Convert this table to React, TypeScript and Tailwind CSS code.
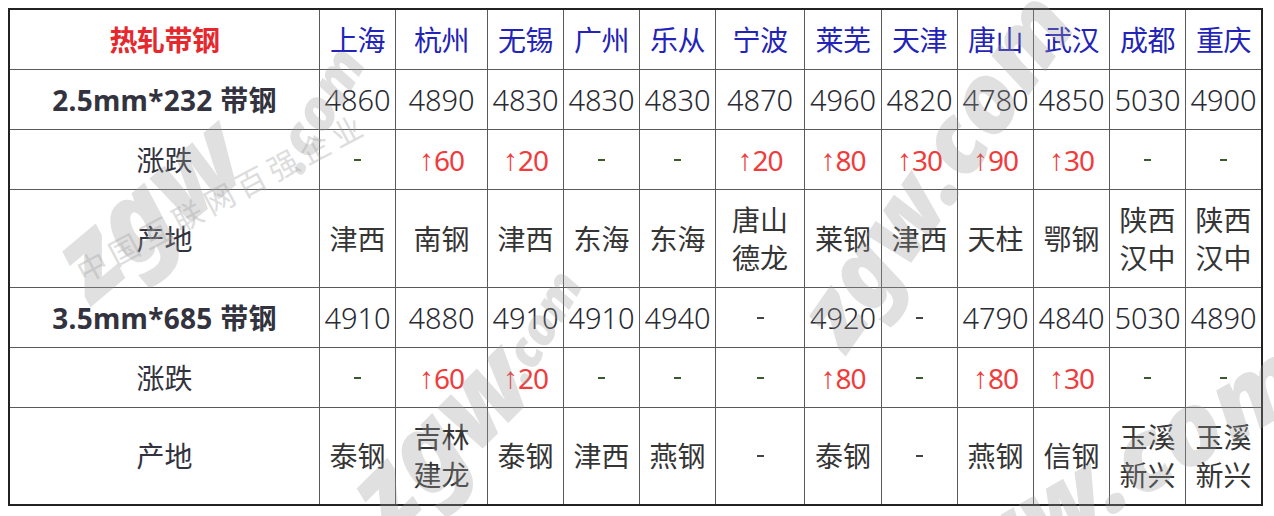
const cities = ['上海', '杭州', '无锡', '广州', '乐从', '宁波', '莱芜', '天津', '唐山', '武汉', '成都', '重庆'];

type Row = { label: string; kind: 'price' | 'change' | 'origin'; cells: string[] };

const rows: Row[] = [
  { label: '2.5mm*232 带钢', kind: 'price', cells: ['4860', '4890', '4830', '4830', '4830', '4870', '4960', '4820', '4780', '4850', '5030', '4900'] },
  { label: '涨跌', kind: 'change', cells: ['-', '↑60', '↑20', '-', '-', '↑20', '↑80', '↑30', '↑90', '↑30', '-', '-'] },
  { label: '产地', kind: 'origin', cells: ['津西', '南钢', '津西', '东海', '东海', '唐山\n德龙', '莱钢', '津西', '天柱', '鄂钢', '陕西\n汉中', '陕西\n汉中'] },
  { label: '3.5mm*685 带钢', kind: 'price', cells: ['4910', '4880', '4910', '4910', '4940', '-', '4920', '-', '4790', '4840', '5030', '4890'] },
  { label: '涨跌', kind: 'change', cells: ['-', '↑60', '↑20', '-', '-', '-', '↑80', '-', '↑80', '↑30', '-', '-'] },
  { label: '产地', kind: 'origin', cells: ['泰钢', '吉林\n建龙', '泰钢', '津西', '燕钢', '-', '泰钢', '-', '燕钢', '信钢', '玉溪\n新兴', '玉溪\n新兴'] },
];

const font = { fontFamily: '"Noto Sans", "Noto Sans CJK SC", sans-serif' };

function Cell({ value, kind }: { value: string; kind: Row['kind'] }) {
  if (value === '-') {
    const tone = kind === 'change' ? 'bg-[#3d5a2e]' : 'bg-[#444]';
    return (
      <div className="bg-white flex items-center justify-center">
        <span className={`block w-[7px] h-[2px] ${tone}`} />
      </div>
    );
  }
  if (kind === 'change') {
    return (
      <div className="bg-white flex items-center justify-center text-[28px] text-[#f03c3c] tracking-[-1px]">
        <span className="text-[30px] font-['Liberation_Sans',sans-serif] mr-[1px]">↑</span>
        {value.slice(1)}
      </div>
    );
  }
  const lines = value.split('\n');
  const size = kind === 'price' ? 'text-[29px] font-light text-[#2a2a32]' : 'text-[28px] text-[#353535]';
  return (
    <div className={`bg-white flex flex-col items-center justify-center leading-[38px] ${size}`}>
      {lines.map((l) => (
        <span key={l}>{l}</span>
      ))}
    </div>
  );
}

// faint "zgw.com" site watermark laid over the table
function Watermark() {
  return (
    <div className="pointer-events-none absolute inset-0 overflow-hidden select-none">
      <div className="absolute left-[40px] top-[150px] -rotate-[40deg] text-[110px] font-black italic text-[#9a9a9a] opacity-30 leading-none">zgw</div>
      <div className="absolute left-[250px] top-[80px] -rotate-[60deg] text-[56px] font-black italic text-[#9a9a9a] opacity-30 leading-none">.com</div>
      <div className="absolute left-[60px] top-[175px] -rotate-[28deg] text-[30px] text-[#a0a0a0] opacity-35 tracking-[6px]">中国互联网百强企业</div>
      <div className="absolute left-[730px] top-[120px] -rotate-[55deg] text-[96px] font-black italic text-[#9a9a9a] opacity-30 leading-none">zgw.com</div>
      <div className="absolute left-[330px] top-[380px] -rotate-[45deg] text-[110px] font-black italic text-[#9a9a9a] opacity-30 leading-none">zgw</div>
      <div className="absolute left-[480px] top-[300px] -rotate-[60deg] text-[50px] font-black italic text-[#9a9a9a] opacity-30 leading-none">.com</div>
      <div className="absolute left-[900px] top-[420px] -rotate-[30deg] text-[100px] font-black italic text-[#9a9a9a] opacity-30 leading-none">zgw.com</div>
    </div>
  );
}

export default function App() {
  return (
    <div className="w-[1274px] h-[516px] bg-white relative overflow-hidden" style={font}>
      <div className="pt-[8px] pl-[8px]">
        <div className="inline-block border-2 border-[#222]">
          <div className="grid gap-px bg-[#5a5a5a] grid-cols-[309px_75px_91px_75px_75px_75px_88px_76px_75px_75px_75px_75px_75px] grid-rows-[59px_59px_59px_97px_59px_59px_96px]">
            <div className="bg-white flex items-center justify-center text-[28px] font-bold text-[#e6282e] tracking-[-0.5px]">
              热轧带钢
            </div>
            {cities.map((c) => (
              <div key={c} className="bg-white flex items-center justify-center text-[28px] text-[#2323b8] tracking-[-0.5px]">
                {c}
              </div>
            ))}
            {rows.map((r, i) => (
              <>
                <div
                  key={`l${i}`}
                  className={`bg-white flex items-center justify-center text-[28px] text-[#333340] ${r.kind === 'price' ? 'font-bold tracking-[0.3px]' : ''}`}
                >
                  {r.label}
                </div>
                {r.cells.map((v, j) => (
                  <Cell key={`${i}-${j}`} value={v} kind={r.kind} />
                ))}
              </>
            ))}
          </div>
        </div>
      </div>
      <Watermark />
    </div>
  );
}
